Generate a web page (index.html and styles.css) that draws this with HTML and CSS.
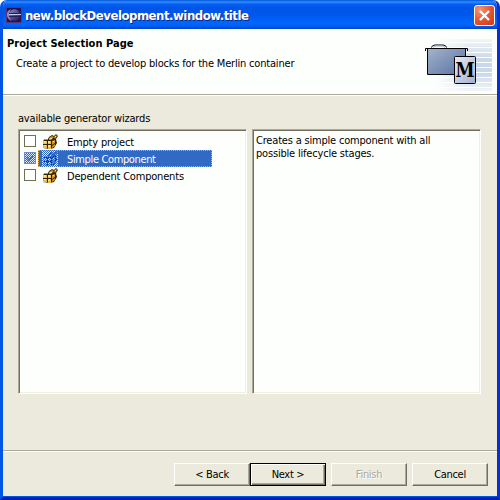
FILE: index.html
```html
<!DOCTYPE html>
<html lang="en">
<head>
<meta charset="utf-8">
<title>new.blockDevelopment.window.title</title>
<link rel="stylesheet" href="styles.css">
</head>
<body>
<svg width="0" height="0" class="defs" aria-hidden="true">
  <symbol id="blocks" viewBox="0 0 16 16">
    <path d="M1 7L3 5H6L7 3L10 1L12 2L14 0L16 2L14 5L15 9L12 14L8 15L1 14Z" fill="#30230b"/>
    <path d="M1 7h4v3H1zM6 7h3v3H6zM1 11h4v3H1zM6 11h3v4H6z" fill="#f3b844"/>
    <path d="M3 5h3v1H3zM7 4l3-2 2 1-3 3H7zM12 3l2-2 1 1-2 3zM10 7l3-1v3l-3 2zM10 12l3-2v2l-3 2z" fill="#d39324"/>
    <path d="M2 7h2v2H2zM6 7h2v2H6zM2 11h2v1H2zM6 11h2v2H6zM8 4h2v1H8zM13 2h1v1h-1zM11 7h1v1h-1z" fill="#ffe07d"/>
  </symbol>
</svg>
<div class="window">
  <header class="titlebar">
    <svg class="app-icon" width="16" height="16" viewBox="0 0 16 16">
      <defs><linearGradient id="sphere" x1="0" y1="0" x2="1" y2="1"><stop stop-color="#9294cf"/><stop offset=".5" stop-color="#504a91"/><stop offset="1" stop-color="#221a55"/></linearGradient></defs>
      <path d="M0 0h16v16H0z" fill="#55357c"/><path d="M1 1h14v14H1z" fill="#24144e"/>
      <circle cx="8.5" cy="8" r="5.7" fill="url(#sphere)"/>
      <path d="M5 2Q0 4 1 9q1 4 5 5-3-3-3-6t2-6z" fill="#8886c0"/>
      <path d="M3 6.500h11M3 9.500h11" stroke="#292057"/><path d="M3 7.500h12" stroke="#c3c6e8"/>
    </svg>
    <h1 class="title">new.blockDevelopment.window.title</h1>
    <button class="close" aria-label="Close"><svg width="21" height="21" viewBox="0 0 21 21"><path d="M6 6l9 9M15 6l-9 9" stroke="#fff" stroke-width="2.3"/></svg></button>
  </header>
  <section class="banner">
    <div class="banner-text">
      <h2>Project Selection Page</h2>
      <p>Create a project to develop blocks for the Merlin container</p>
    </div>
    <svg class="banner-art" width="68" height="54" viewBox="0 0 68 54">
      <defs>
        <linearGradient id="fade"><stop offset=".15" stop-color="#cbd7ea" stop-opacity="0"/><stop offset=".65" stop-color="#cbd7ea"/><stop offset="1" stop-color="#cbd7ea"/></linearGradient>
        <linearGradient id="stripeFade" x1="0" x2="0" y1="0" y2="1"><stop stop-color="#fdfffc" stop-opacity=".8"/><stop offset=".4" stop-color="#fdfffc" stop-opacity="0"/><stop offset=".65" stop-color="#fdfffc" stop-opacity="0"/><stop offset="1" stop-color="#fdfffc" stop-opacity=".8"/></linearGradient>
        <linearGradient id="case" x1="0" y1="0" x2="1" y2="1"><stop stop-color="#a5b3cb"/><stop offset="1" stop-color="#5672a3"/></linearGradient>
        <linearGradient id="card" x1="0" y1="0" x2="1" y2="1"><stop stop-color="#e9edf5"/><stop offset="1" stop-color="#a1b0cc"/></linearGradient>
        <pattern id="lines" width="68" height="5" patternUnits="userSpaceOnUse"><path d="M0 0h68v4H0z" fill="url(#fade)"/></pattern>
      </defs>
      <path d="M10 1h57v52H10z" fill="url(#lines)"/><path d="M10 0h58v54H10z" fill="url(#stripeFade)"/>
      <path d="M6 9.500Q8 7 10 7h8q2 0 4 2.500" fill="none" stroke="#000"/><path d="M8 9.500Q9 8 11 8h6q2 0 3 1.500" fill="none" stroke="#9cadc6"/>
      <path d="M2.500 10.500h38v26h-38z" fill="url(#case)" stroke="#000"/><path d="M.5 13v-2.500h42V13" fill="none" stroke="#000"/>
      <rect x="29.500" y="18.500" width="21" height="27" rx="1" fill="url(#card)" stroke="#000"/>
      <text class="logo-letter" text-anchor="middle" transform="translate(40 39) scale(.82 1)">M</text>
    </svg>
  </section>
  <main class="content">
    <div class="label">available generator wizards</div>
    <div class="panes">
      <div class="pane list">
        <div class="row"><span class="check"></span><div class="item"><svg width="16" height="16"><use href="#blocks"/></svg><span class="name">Empty project</span></div></div>
        <div class="row selected"><span class="check"><svg width="10" height="10" viewBox="0 0 11 11"><path d="M2 5l2.500 3L9 3" fill="none" stroke="#4a70a8" stroke-width="1.800"/></svg></span><div class="item"><span class="dither"><svg width="16" height="16"><use href="#blocks"/></svg></span><span class="name">Simple Component</span></div></div>
        <div class="row"><span class="check"></span><div class="item"><svg width="16" height="16"><use href="#blocks"/></svg><span class="name">Dependent Components</span></div></div>
      </div>
      <div class="pane description">Creates a simple component with all<br>possible lifecycle stages.</div>
    </div>
  </main>
  <footer class="actions">
    <button class="btn">&lt; Back</button>
    <button class="btn default">Next &gt;</button>
    <button class="btn disabled" disabled>Finish</button>
    <button class="btn">Cancel</button>
  </footer>
</div>
</body>
</html>
```
FILE: styles.css
```css
* { box-sizing: border-box; }
html, body { margin: 0; width: 500px; height: 500px; overflow: hidden; background: #fff; }
body { font: 11px/13px "DejaVu Sans Condensed", "DejaVu Sans", sans-serif; font-stretch: condensed; letter-spacing: -.19px; color: #000; }
h1, h2, p { margin: 0; }
svg { display: block; flex: none; }
.defs { position: absolute; }
.window { width: 500px; height: 500px; display: flex; flex-direction: column; background: #ece9dd; border: solid; border-width: 0 3px 3px; border-color: #0055e5 #0831c9 #001db4 #0055e5; border-radius: 7px 7px 0 0; overflow: hidden; }
.titlebar { height: 29px; margin: 0 -3px; padding: 1px 5px 0 6px; display: flex; align-items: center; background: linear-gradient(#0054d7 0, #338fff 2px, #0660f5 4px, #0055e6 8px, #0058ec 15px, #0066ff 23px, #0060f5 26px, #0040c6 29px); flex: none; }
.title { margin: 1px 0 0 3px; font: bold 13px/18px "DejaVu Sans Condensed", "DejaVu Sans", sans-serif; font-stretch: condensed; letter-spacing: -.47px; color: #fff; text-shadow: 1px 1px #102a80; white-space: nowrap; }
.close { width: 21px; height: 21px; margin-left: auto; padding: 0; border: 1px solid #fff; border-radius: 3px; background: radial-gradient(circle at 25% 20%, #f19677, #e75734 50%, #cb3612); }
.close svg { margin: -1px; }
.banner { height: 67px; display: flex; justify-content: space-between; background: #fdfffc; border-bottom: 1px solid #fff; box-shadow: inset 0 -1px #aaa79b; flex: none; }
.banner-text { padding: 8px 0 0 4px; white-space: nowrap; }
h2 { font-size: 11px; line-height: 13px; letter-spacing: .04px; }
.banner p { margin: 7px 0 0 9px; }
.banner-art { margin: 9px 4px 0 0; }
.logo-letter { font: bold 21px "DejaVu Serif", serif; font-stretch: normal; letter-spacing: 0; }
.content { flex: 1; padding: 16px 16px 0 15px; }
.label { height: 17px; }
.panes { display: grid; grid-template-columns: 229px 229px; gap: 5px; }
.pane { height: 265px; background: #fdfffc; border: 1px solid; border-color: #aca899 #fff #fff #aca899; box-shadow: inset 1px 1px #716f64, inset -1px -1px #f1efe2; white-space: nowrap; }
.list { padding-top: 3px; }
.row { height: 17px; display: flex; align-items: center; padding-left: 5px; }
.check { width: 12px; height: 12px; margin-top: -2px; border: 1px solid #716f55; background: #fff; }
.item { height: 17px; display: flex; align-items: center; margin-left: 2px; padding-left: 4px; width: 174px; }
.name { margin: 2px 0 0 9px; }
.selected .item { background: #316ac5; color: #fff; border: 1px dotted #e9ae43; padding-left: 3px; letter-spacing: -.36px; }
.selected .check { border-color: #6d8ec9; background: repeating-conic-gradient(#316ac5 0 25%, #dbe7f8 0 50%) 0 0 / 2px 2px; }
.dither { position: relative; background: #e5efff; }
.dither::after { content: ""; position: absolute; inset: 0; background: repeating-conic-gradient(#316ac5 0 25%, transparent 0 50%) 0 0 / 2px 2px; }
.description { padding: 4px 3px; }
.actions { height: 47px; padding: 12px 9px 0; display: flex; justify-content: flex-end; background: #ece9dd; border-top: 1px solid #aaa79b; box-shadow: inset 0 1px #fff, inset 0 -1px #0055e5; flex: none; }
.btn { width: 76px; height: 23px; padding: 0; font: inherit; letter-spacing: -.3px; color: #000; background: #ece9dd; border: 1px solid; border-color: #fff #716f64 #716f64 #fff; box-shadow: inset -1px -1px #aca899; }
.default { border: 1px solid #000; box-shadow: inset 1px 1px #fff, inset -1px -1px #716f64, inset -2px -2px #aca899; }
.disabled { margin: 0 5px; color: #aca899; text-shadow: 1px 1px #fff; }
```
